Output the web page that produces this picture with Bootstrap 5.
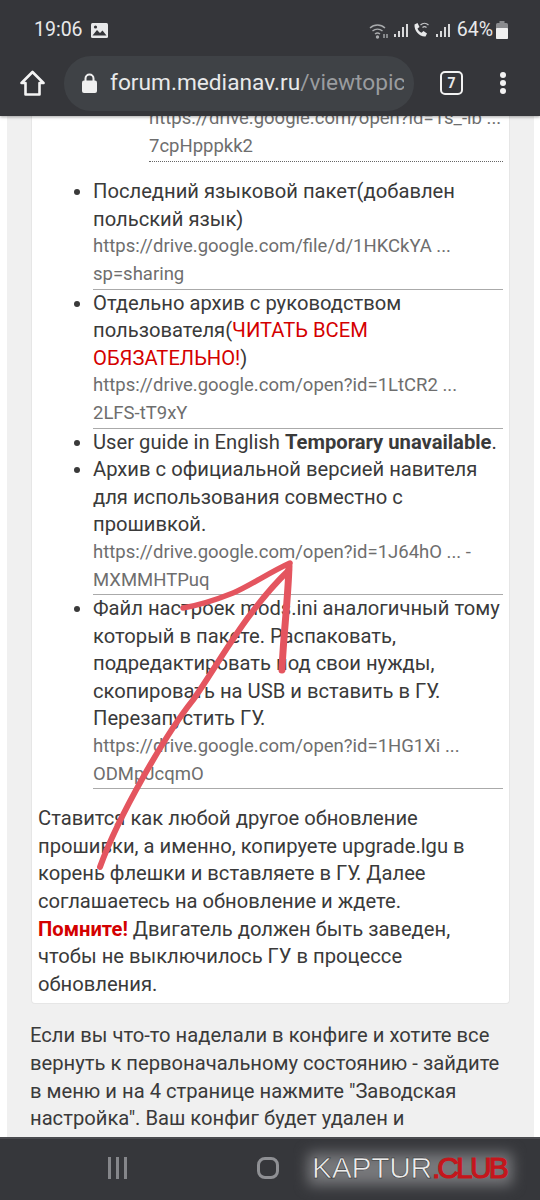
<!DOCTYPE html>
<html lang="en">
<head>
  <meta charset="UTF-8" />
  <meta name="viewport" content="width=device-width, initial-scale=1.0" />
  <title>forum.medianav.ru</title>
  <link rel="stylesheet" href="https://cdn.jsdelivr.net/npm/bootstrap@5.3.3/dist/css/bootstrap.min.css" />
  <style>
    body { width: 540px; height: 1200px; overflow: hidden; font-family: Roboto, sans-serif; color: #3a3a3a; background: #fff; position: relative; }
    .top-chrome { height: 116px; background: #35363a; color: #e8e9ea; box-shadow: 0 1px 3px rgba(0,0,0,.35); position: relative; z-index: 2; }
    .status-row { height: 56px; padding: 4px 32px 0 34px; font-size: 19.5px; }
    .pct-text { margin-left: 7px; margin-right: 3px; }
    .url-row { height: 60px; padding: 0 33px 6px 20px; }
    .url-pill { width: 350px; height: 55px; border-radius: 27px; background: #3f4246; margin-left: 19px; padding-left: 18px; font-size: 22.7px; white-space: nowrap; overflow: hidden; }
    .url-text { width: 294px; overflow: hidden; margin-left: 13px; }
    .url-path { color: #9a9c9f; }
    .tab-count { width: 23px; height: 24px; border: 2px solid #f2f2f2; border-radius: 5px; font-size: 14px; font-weight: 700; line-height: 20px; text-align: center; margin-left: 26px; }
    .page-view { height: 1021px; overflow: hidden; background: #fff; }
    .grey-band { margin: -11px 6px 0 7px; background: #f0f0f0; padding: 0 24px; height: 1060px; }
    .post-box { background: #fff; border-radius: 0 0 4px 4px; border: 1px solid #e6e6e6; border-top: 0; padding: 0 6px 5px 6px; font-size: 20.2px; line-height: 27.6px; }
    .post-box ul { margin: 0; padding-left: 55px; }
    .post-box ul ul { padding-left: 56px; }
    .dl-link { display: block; color: #6e6e6e; font-size: 18.5px; border-bottom: 1px solid #aaa; }
    .dl-dotted { border-bottom: 1px dotted #666; padding-bottom: 1px; }
    .red-word { color: #d40000; }
    .after-text { font-size: 20.2px; line-height: 27.6px; margin-top: 18px; margin-left: -1px; }
    .bottom-bar { height: 63px; background: #36373b; border-top: 2px solid #4a4b4f; position: relative; z-index: 2; }
    .nav-lines { left: 107px; top: 18px; width: 21px; height: 22px; position: absolute; }
    .nav-home { left: 257px; top: 18px; width: 22px; height: 22px; border: 3px solid #8f9094; border-radius: 8px; position: absolute; }
    .wm-halo { position: absolute; left: 308px; top: 14px; width: 204px; height: 32px; background: #77787b; filter: blur(7px); }
    .wm-text { position: absolute; left: 312px; top: 13px; font-family: "Liberation Sans", sans-serif; font-size: 30px; line-height: 32px; color: #ececec; letter-spacing: -.3px; -webkit-text-stroke: .5px #222; white-space: nowrap; }
    .wm-red { color: #c4161c; letter-spacing: -2.9px; -webkit-text-stroke: 1.2px #c4161c; }
    .arrow-layer { position: absolute; left: 0; top: 0; pointer-events: none; z-index: 1; }
  </style>
</head>
<body>
  <div class="top-chrome">
    <div class="status-row d-flex align-items-center">
      <span>19:06</span>
      <svg class="ms-2" width="17" height="15" viewBox="0 0 17 15"><rect width="17" height="15" rx="1.5" fill="#e8e9ea"/><path d="M1.5 12.5 6 7l3 3 2.5-2.5 4 5z" fill="#35363a"/><circle cx="4.500" cy="4" r="1.600" fill="#35363a"/></svg>
      <div class="ms-auto d-flex align-items-center">
        <svg width="20" height="17" viewBox="0 0 20 17" fill="none" stroke="#a9abad" stroke-width="1.400"><path d="M1 6a11 11 0 0 1 15 0M3.500 9a7.500 7.500 0 0 1 10 0M6 12a4 4 0 0 1 5 0"/><circle cx="8.500" cy="15" r="1" fill="#a9abad"/><path d="M15 12v4M18 12v4"/></svg>
        <svg class="ms-1" width="15" height="15" viewBox="0 0 15 15" fill="#d8d9da"><rect x="1" y="11" width="2" height="3"/><rect x="5" y="8" width="2" height="6"/><rect x="9" y="4" width="2" height="10"/><rect x="13" y="1" width="2" height="13"/></svg>
        <svg class="ms-1" width="19" height="16" viewBox="0 0 18 16" fill="none"><path d="M2 2.500 5 1l2 4-2 1.500c.8 2 2 3.400 4 4.300L11 9l3.500 2.500-1.500 3C7 15 1.500 9 2 2.500z" fill="#e8e9ea"/><path d="M8 3a6 6 0 0 1 8 0M10 5.500a3 3 0 0 1 4 0" stroke="#c4c5c7" stroke-width="1.200"/></svg>
        <svg class="ms-1" width="15" height="15" viewBox="0 0 15 15" fill="#d8d9da"><rect x="1" y="11" width="2" height="3"/><rect x="5" y="8" width="2" height="6"/><rect x="9" y="4" width="2" height="10"/><rect x="13" y="1" width="2" height="13"/></svg>
        <span class="pct-text">64%</span>
        <svg width="12" height="18" viewBox="0 0 12 18"><rect x="0" y="2" width="12" height="16" rx="1.500" fill="#8a8b8e"/><rect x="3.500" y="0" width="5" height="2" fill="#8a8b8e"/><rect x="0" y="7" width="12" height="11" rx="1" fill="#f0f0f0"/></svg>
      </div>
    </div>
    <div class="url-row d-flex align-items-center">
      <svg width="25" height="26" viewBox="0 0 25 26" fill="none" stroke="#f4f4f4" stroke-width="2.600" stroke-linejoin="round"><path d="M1.500 13 12.500 2l11 11h-4v11.500h-14V13z"/></svg>
      <div class="url-pill d-flex align-items-center">
        <svg width="15" height="20" viewBox="0 0 15 20"><path d="M3.500 8V5.500a4 4 0 0 1 8 0V8" fill="none" stroke="#f0f0f0" stroke-width="2"/><rect y="7.500" width="15" height="12.500" rx="2" fill="#f0f0f0"/></svg>
        <div class="url-text">forum.medianav.ru<span class="url-path">/viewtopic</span></div>
      </div>
      <div class="tab-count">7</div>
      <svg class="ms-auto" width="8" height="24" viewBox="0 0 8 24" fill="#f2f2f2"><circle cx="4" cy="4" r="3"/><circle cx="4" cy="12" r="3"/><circle cx="4" cy="20" r="3"/></svg>
    </div>
  </div>

  <div class="page-view">
    <div class="grey-band">
      <div class="post-box">
        <ul class="list-unstyled">
          <li>
            <ul class="list-unstyled">
              <li><span class="dl-link dl-dotted">https://drive.google.com/open?id=1s_-lb ... 7cpHpppkk2</span></li>
            </ul>
          </li>
        </ul>
        <ul class="list-block">
          <li class="pt-3">Последний языковой пакет(добавлен польский язык)
            <span class="dl-link">https://drive.google.com/file/d/1HKCkYA ... sp=sharing</span></li>
          <li>Отдельно архив с руководством пользователя(<span class="red-word">ЧИТАТЬ ВСЕМ ОБЯЗАТЕЛЬНО!</span>)
            <span class="dl-link">https://drive.google.com/open?id=1LtCR2 ... 2LFS-tT9xY</span></li>
          <li>User guide in English <b>Temporary unavailable</b>.</li>
          <li>Архив с официальной версией навителя для использования совместно с прошивкой.
            <span class="dl-link">https://drive.google.com/open?id=1J64hO ... -MXMMHTPuq</span></li>
          <li>Файл настроек mods.ini аналогичный тому который в пакете. Распаковать, подредактировать под свои нужды, скопировать на USB и вставить в ГУ. Перезапустить ГУ.
            <span class="dl-link">https://drive.google.com/open?id=1HG1Xi ... ODMpJcqmO</span></li>
        </ul>
        <div class="mt-3">Ставится как любой другое обновление прошивки, а именно, копируете upgrade.lgu в корень флешки и вставляете в ГУ. Далее соглашаетесь на обновление и ждете.<br><b class="red-word">Помните!</b> Двигатель должен быть заведен, чтобы не выключилось ГУ в процессе обновления.</div>
      </div>
      <div class="after-text">Если вы что-то наделали в конфиге и хотите все вернуть к первоначальному состоянию - зайдите в меню и на 4 странице нажмите "Заводская настройка". Ваш конфиг будет удален и</div>
    </div>
  </div>

  <div class="bottom-bar">
    <svg class="nav-lines" viewBox="0 0 21 22" fill="#85868a"><rect x="1" y="0" width="3" height="22"/><rect x="9" y="0" width="3" height="22"/><rect x="17" y="0" width="3" height="22"/></svg>
    <div class="nav-home"></div>
    <div class="wm-halo"></div>
    <div class="wm-text">KAPTUR<span class="wm-red">.CLUB</span></div>
  </div>

  <svg class="arrow-layer" width="540" height="1200" viewBox="0 0 540 1200" fill="none" stroke="#e4555f" stroke-linecap="round" stroke-linejoin="round">
    <path d="M100 867C118 817 165 735 193 700C215 670 245 612 289 570" stroke-width="6"/>
    <path d="M183 608C200 605 218 599 233 593S270 572 290 563" stroke-width="5.500"/>
    <path d="M289 566C288 600 283 640 282 670" stroke-width="7"/>
  </svg>
</body>
</html>
